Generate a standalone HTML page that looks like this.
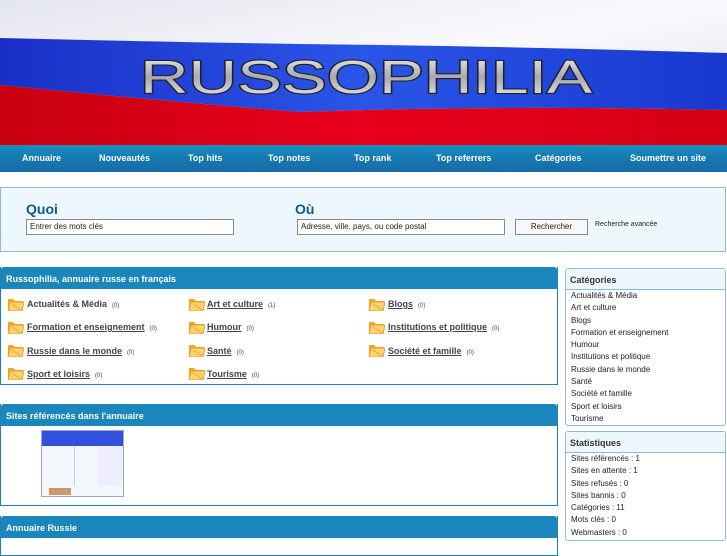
<!DOCTYPE html>
<html><head><meta charset="utf-8"><style>
*{margin:0;padding:0;box-sizing:border-box}
body{width:727px;height:545px;overflow:hidden;background:#fff;font-family:"Liberation Sans",sans-serif;position:relative}
.abs{position:absolute}
.nav{left:0;top:145px;width:727px;height:27px;background:linear-gradient(#1a8fc0,#1577b0 55%,#1a6aa8);}
.nav span{position:absolute;top:8px;color:#fff;font-size:9px;font-weight:bold}
.search{left:0;top:187px;width:726px;height:65px;background:#eef7fd;border:1px solid #8bbbd8}
.search h3{position:absolute;color:#0d5a8e;font-size:14px;font-weight:bold}
.inp{position:absolute;height:16px;border:1px solid #888;background:#fff;font-size:8px;padding:2px 3px;color:#222}
.panel{border:1px solid #1a84b8;border-top:none;background:#fff}
.ph{background:#1a86bb;color:#fff;font-size:9px;font-weight:bold;height:22px;padding:7px 5px;border-top-left-radius:3px;border-top-right-radius:3px}
.cat{position:absolute;font-size:9px;font-weight:bold;color:#444;text-decoration:underline}
.cat small{font-size:6px;font-weight:normal;text-decoration:none;margin-left:5px;display:inline-block}
.fold{position:absolute;width:17px;height:14px}
.side{left:565px;width:161px;border:1px solid #8bbbd8;border-radius:3px;background:#fff}
.sh{background:#eef7fd;border-bottom:1px solid #8bbbd8;font-size:9px;font-weight:bold;color:#333;height:21px;padding:6px 4px}
.side div.l{font-size:8px;color:#222;height:12.3px;padding-left:5px;line-height:12px}
</style></head><body>
<svg class="abs" style="left:0;top:0" width="727" height="145">
<defs>
<linearGradient id="w" x1="0" y1="0" x2="1" y2="1"><stop offset="0" stop-color="#e4e6ee"/><stop offset=".5" stop-color="#fafafd"/><stop offset="1" stop-color="#d8dde8"/></linearGradient>
<linearGradient id="b" x1="0" y1="0" x2="1" y2="0"><stop offset="0" stop-color="#1a2fc8"/><stop offset=".5" stop-color="#2a55e8"/><stop offset="1" stop-color="#1838d0"/></linearGradient>
<linearGradient id="r" x1="0" y1="0" x2="1" y2="0"><stop offset="0" stop-color="#c80010"/><stop offset=".5" stop-color="#e8001c"/><stop offset="1" stop-color="#d40014"/></linearGradient>
<linearGradient id="t" x1="0" y1="0" x2="0" y2="1"><stop offset="0" stop-color="#f8f8f8"/><stop offset=".5" stop-color="#a8a8b0"/><stop offset="1" stop-color="#f0f0f4"/></linearGradient>
</defs>
<rect width="727" height="145" fill="url(#w)"/>
<path d="M0 38 Q170 42 300 44 Q500 46 727 53 L727 110 Q500 105 300 112 Q150 100 0 85Z" fill="url(#b)"/>
<path d="M0 85 Q150 100 300 112 Q500 105 727 110 L727 145 L0 145Z" fill="url(#r)"/>
<text x="140" y="93" font-family="Liberation Sans" font-size="46" textLength="452" lengthAdjust="spacingAndGlyphs" fill="url(#t)" stroke="#222" stroke-width="2.2" paint-order="stroke">RUSSOPHILIA</text>
</svg>
<div class="abs nav">
<span style="left:22px">Annuaire</span><span style="left:99px">Nouveautés</span><span style="left:188px">Top hits</span><span style="left:268px">Top notes</span><span style="left:354px">Top rank</span><span style="left:436px">Top referrers</span><span style="left:535px">Catégories</span><span style="left:630px">Soumettre un site</span>
</div>
<div class="abs search">
<h3 style="left:25px;top:13px">Quoi</h3>
<h3 style="left:294px;top:13px">Où</h3>
<div class="inp" style="left:25px;top:31px;width:208px">Entrer des mots clés</div>
<div class="inp" style="left:296px;top:31px;width:208px">Adresse, ville, pays, ou code postal</div>
<div class="inp" style="left:514px;top:31px;width:73px;text-align:center;background:#f8f8f8">Rechercher</div>
<div style="position:absolute;left:594px;top:33px;font-size:7px;color:#222">Recherche avancée</div>
</div>
<div class="abs panel" style="left:0;top:267px;width:558px;height:118px"><div class="ph">Russophilia, annuaire russe en français</div></div>
<div class="abs panel" style="left:0;top:404px;width:558px;height:102px"><div class="ph">Sites référencés dans l'annuaire</div>
<div style="position:absolute;left:40px;top:26px;width:83px;height:67px;border:1px solid #9ac;background:#f4f7fb">
<div style="height:15px;background:#3050e0"></div>
<div style="position:absolute;left:32px;top:15px;width:1px;height:40px;background:#ccd"></div>
<div style="position:absolute;left:55px;top:15px;width:26px;height:40px;background:#eef"></div>
<div style="position:absolute;left:7px;top:57px;width:22px;height:7px;background:#c96"></div>
</div></div>
<div class="abs panel" style="left:0;top:516px;width:558px;height:40px"><div class="ph">Annuaire Russie</div></div>
<svg width="0" height="0" style="position:absolute"><defs><g id="f"><path d="M1 2 L6 2 L8 4 L16 4 L16 13 L1 13Z" fill="#f5a623"/><path d="M3 5 L17 5 L15 14 L1 14Z" fill="#ffd36b" stroke="#e8902a" stroke-width=".8"/><path d="M5 7 L14 13" stroke="#f0a040" stroke-width="1"/></g></defs></svg>
<div>
<svg class="fold" style="left:7px;top:297px"><use href="#f"/></svg><div class="cat" style="left:27px;top:299px;text-decoration:none">Actualités &amp; Média<small>(0)</small></div>
<svg class="fold" style="left:188px;top:297px"><use href="#f"/></svg><div class="cat" style="left:207px;top:299px">Art et culture<small>(1)</small></div>
<svg class="fold" style="left:368px;top:297px"><use href="#f"/></svg><div class="cat" style="left:388px;top:299px">Blogs<small>(0)</small></div>
<svg class="fold" style="left:7px;top:320px"><use href="#f"/></svg><div class="cat" style="left:27px;top:322px">Formation et enseignement<small>(0)</small></div>
<svg class="fold" style="left:188px;top:320px"><use href="#f"/></svg><div class="cat" style="left:207px;top:322px">Humour<small>(0)</small></div>
<svg class="fold" style="left:368px;top:320px"><use href="#f"/></svg><div class="cat" style="left:388px;top:322px">Institutions et politique<small>(0)</small></div>
<svg class="fold" style="left:7px;top:343px"><use href="#f"/></svg><div class="cat" style="left:27px;top:346px">Russie dans le monde<small>(0)</small></div>
<svg class="fold" style="left:188px;top:343px"><use href="#f"/></svg><div class="cat" style="left:207px;top:346px">Santé<small>(0)</small></div>
<svg class="fold" style="left:368px;top:343px"><use href="#f"/></svg><div class="cat" style="left:388px;top:346px">Société et famille<small>(0)</small></div>
<svg class="fold" style="left:7px;top:366px"><use href="#f"/></svg><div class="cat" style="left:27px;top:369px">Sport et loisirs<small>(0)</small></div>
<svg class="fold" style="left:188px;top:366px"><use href="#f"/></svg><div class="cat" style="left:207px;top:369px">Tourisme<small>(0)</small></div>
</div>
<div class="abs side" style="top:268px;height:158px"><div class="sh">Catégories</div>
<div class="l">Actualités &amp; Média</div><div class="l">Art et culture</div><div class="l">Blogs</div><div class="l">Formation et enseignement</div><div class="l">Humour</div><div class="l">Institutions et politique</div><div class="l">Russie dans le monde</div><div class="l">Santé</div><div class="l">Société et famille</div><div class="l">Sport et loisirs</div><div class="l">Tourisme</div></div>
<div class="abs side" style="top:431px;height:110px"><div class="sh">Statistiques</div>
<div class="l">Sites référencés : 1</div><div class="l">Sites en attente : 1</div><div class="l">Sites refusés : 0</div><div class="l">Sites bannis : 0</div><div class="l">Catégories : 11</div><div class="l">Mots clés : 0</div><div class="l">Webmasters : 0</div></div>
</body></html>
